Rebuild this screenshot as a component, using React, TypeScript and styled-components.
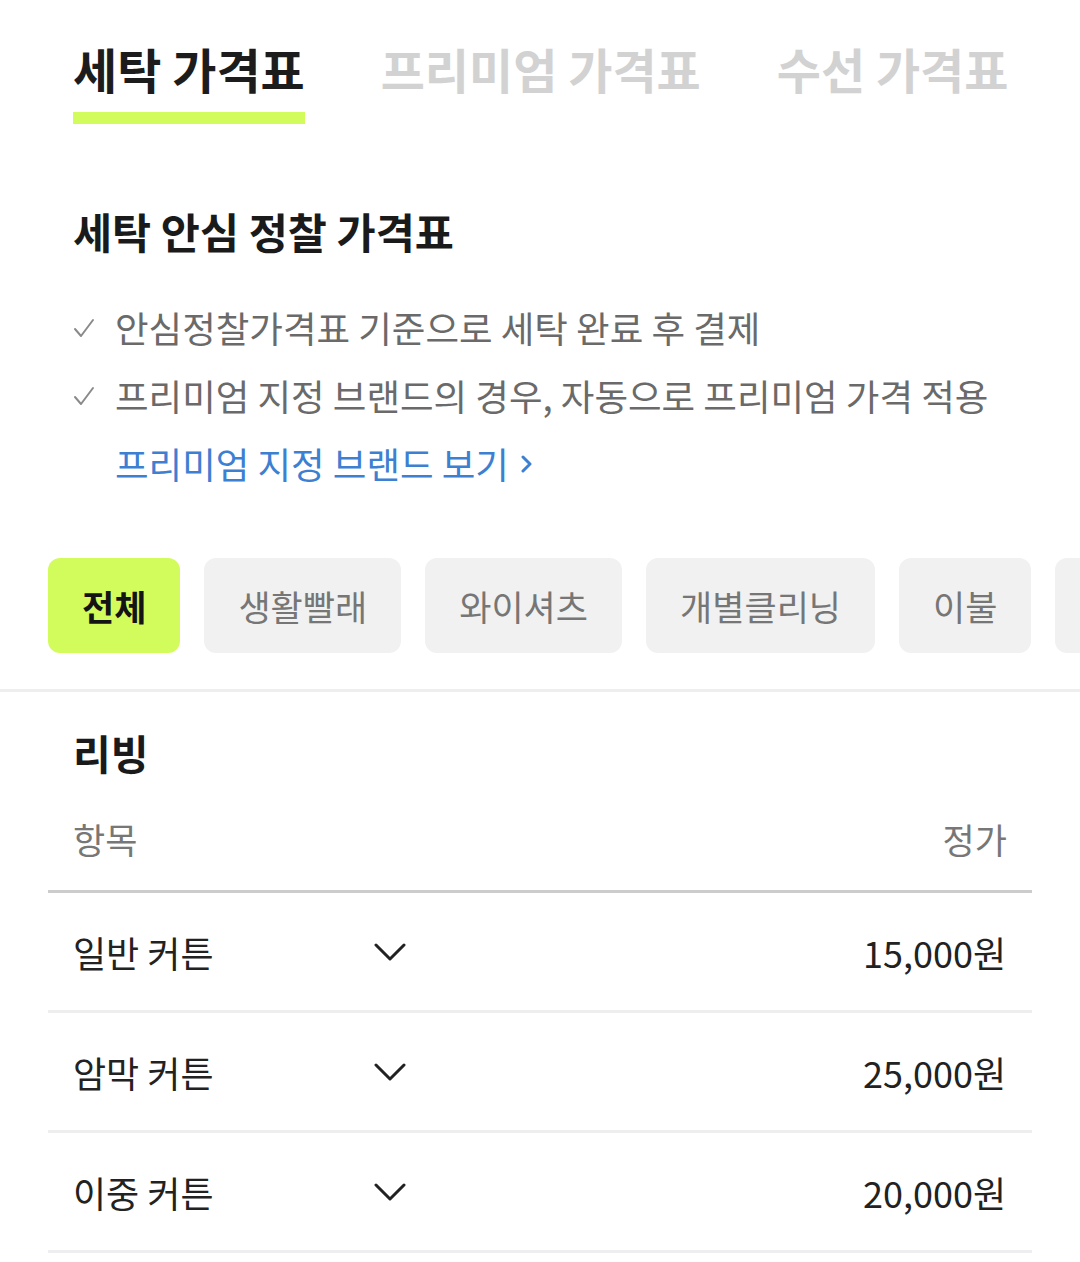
import React, { useState } from 'react';
import styled, { createGlobalStyle } from 'styled-components';

const GlobalStyle = createGlobalStyle`
  body {
    margin: 0;
    background: #ffffff;
    font-family: "Noto Sans CJK KR", "Noto Sans", sans-serif;
    color: #1a1a1a;
  }
`;

const Page = styled.div`
  width: 1080px;
  overflow: hidden;
`;

const TabBar = styled.div`
  display: flex;
  gap: 76px;
  padding: 37px 0 0 73px;
`;

const Tab = styled.div<{ $active?: boolean }>`
  font-size: 48px;
  line-height: 62px;
  font-weight: 700;
  padding-bottom: 13px;
  color: ${p => (p.$active ? '#1c1c1c' : '#d2d2d2')};
  border-bottom: 12px solid ${p => (p.$active ? '#d2fc5c' : 'transparent')};
  white-space: nowrap;
`;

const Intro = styled.div`
  padding: 79px 0 0 73px;
`;

const Title = styled.h2`
  margin: 0 0 36px;
  font-size: 42.5px;
  line-height: 55px;
  font-weight: 700;
  color: #1a1a1a;
`;

const Bullet = styled.div`
  display: flex;
  align-items: center;
  font-size: 36.5px;
  line-height: 68px;
  color: #6a6a6a;
  white-space: nowrap;
`;

const Check = styled.span`
  display: flex;
  width: 42px;
`;

const Link = styled.a`
  display: flex;
  align-items: center;
  gap: 12px;
  margin-left: 42px;
  font-size: 36.5px;
  line-height: 68px;
  color: #3d80d2;
  text-decoration: none;
`;

const Chips = styled.div`
  display: flex;
  gap: 24px;
  padding: 60px 0 36px 48px;
  border-bottom: 3px solid #eeeeee;
  overflow: hidden;
`;

const Chip = styled.button<{ $active?: boolean }>`
  flex-shrink: 0;
  height: 95px;
  padding: 0 34px;
  border: none;
  border-radius: 12px;
  font-family: inherit;
  font-size: 35px;
  font-weight: ${p => (p.$active ? 700 : 400)};
  background: ${p => (p.$active ? '#d2fc5c' : '#f1f1f1')};
  color: ${p => (p.$active ? '#141414' : '#767676')};
  white-space: nowrap;
`;

const Section = styled.div`
  padding: 34px 48px 0;
`;

const Category = styled.h3`
  margin: 0 0 37px 25px;
  font-size: 41px;
  line-height: 53px;
  font-weight: 700;
  color: #1a1a1a;
`;

const HeadRow = styled.div`
  display: flex;
  justify-content: space-between;
  padding: 0 25px 29px;
  border-bottom: 3px solid #cccccc;
  font-size: 35px;
  line-height: 45px;
  color: #777777;
`;

const Row = styled.div`
  display: flex;
  align-items: center;
  height: 117px;
  padding: 0 26px 0 25px;
  border-bottom: 3px solid #eeeeee;
  font-size: 36px;
  color: #222222;
`;

const Name = styled.span`
  width: 301px;
`;

const Toggle = styled.span`
  display: flex;
  cursor: pointer;
`;

const Price = styled.span`
  margin-left: auto;
`;

const tabs = ['세탁 가격표', '프리미엄 가격표', '수선 가격표'];
const chips = ['전체', '생활빨래', '와이셔츠', '개별클리닝', '이불', '신발'];
const items = [
  { name: '일반 커튼', price: '15,000원' },
  { name: '암막 커튼', price: '25,000원' },
  { name: '이중 커튼', price: '20,000원' },
];

const CheckIcon = () => (
  <svg width="22" height="20" viewBox="0 0 22 20" fill="none">
    <polyline points="2,11 8,18 20,2" stroke="#8a8a8a" strokeWidth="2" strokeLinecap="round" strokeLinejoin="round" />
  </svg>
);

const App: React.FC = () => {
  const [tab, setTab] = useState(0);
  const [chip, setChip] = useState(0);

  return (
    <Page>
      <GlobalStyle />
      <TabBar>
        {tabs.map((t, i) => (
          <Tab key={t} $active={tab === i} onClick={() => setTab(i)}>{t}</Tab>
        ))}
      </TabBar>

      <Intro>
        <Title>세탁 안심 정찰 가격표</Title>
        <Bullet><Check><CheckIcon /></Check>안심정찰가격표 기준으로 세탁 완료 후 결제</Bullet>
        <Bullet><Check><CheckIcon /></Check>프리미엄 지정 브랜드의 경우, 자동으로 프리미엄 가격 적용</Bullet>
        <Link href="#">
          프리미엄 지정 브랜드 보기
          <svg width="12" height="20" viewBox="0 0 12 20" fill="none">
            <polyline points="2,3 9,10 2,17" stroke="#3d80d2" strokeWidth="3" strokeLinecap="round" strokeLinejoin="round" />
          </svg>
        </Link>
      </Intro>

      <Chips>
        {chips.map((c, i) => (
          <Chip key={c} $active={chip === i} onClick={() => setChip(i)}>{c}</Chip>
        ))}
      </Chips>

      <Section>
        <Category>리빙</Category>
        <HeadRow>
          <span>항목</span>
          <span>정가</span>
        </HeadRow>
        {items.map(it => (
          <Row key={it.name}>
            <Name>{it.name}</Name>
            <Toggle>
              <svg width="32" height="20" viewBox="0 0 32 20" fill="none">
                <polyline points="2,3 16,17 30,3" stroke="#222" strokeWidth="3" strokeLinecap="round" strokeLinejoin="round" />
              </svg>
            </Toggle>
            <Price>{it.price}</Price>
          </Row>
        ))}
      </Section>
    </Page>
  );
};

export default App;
